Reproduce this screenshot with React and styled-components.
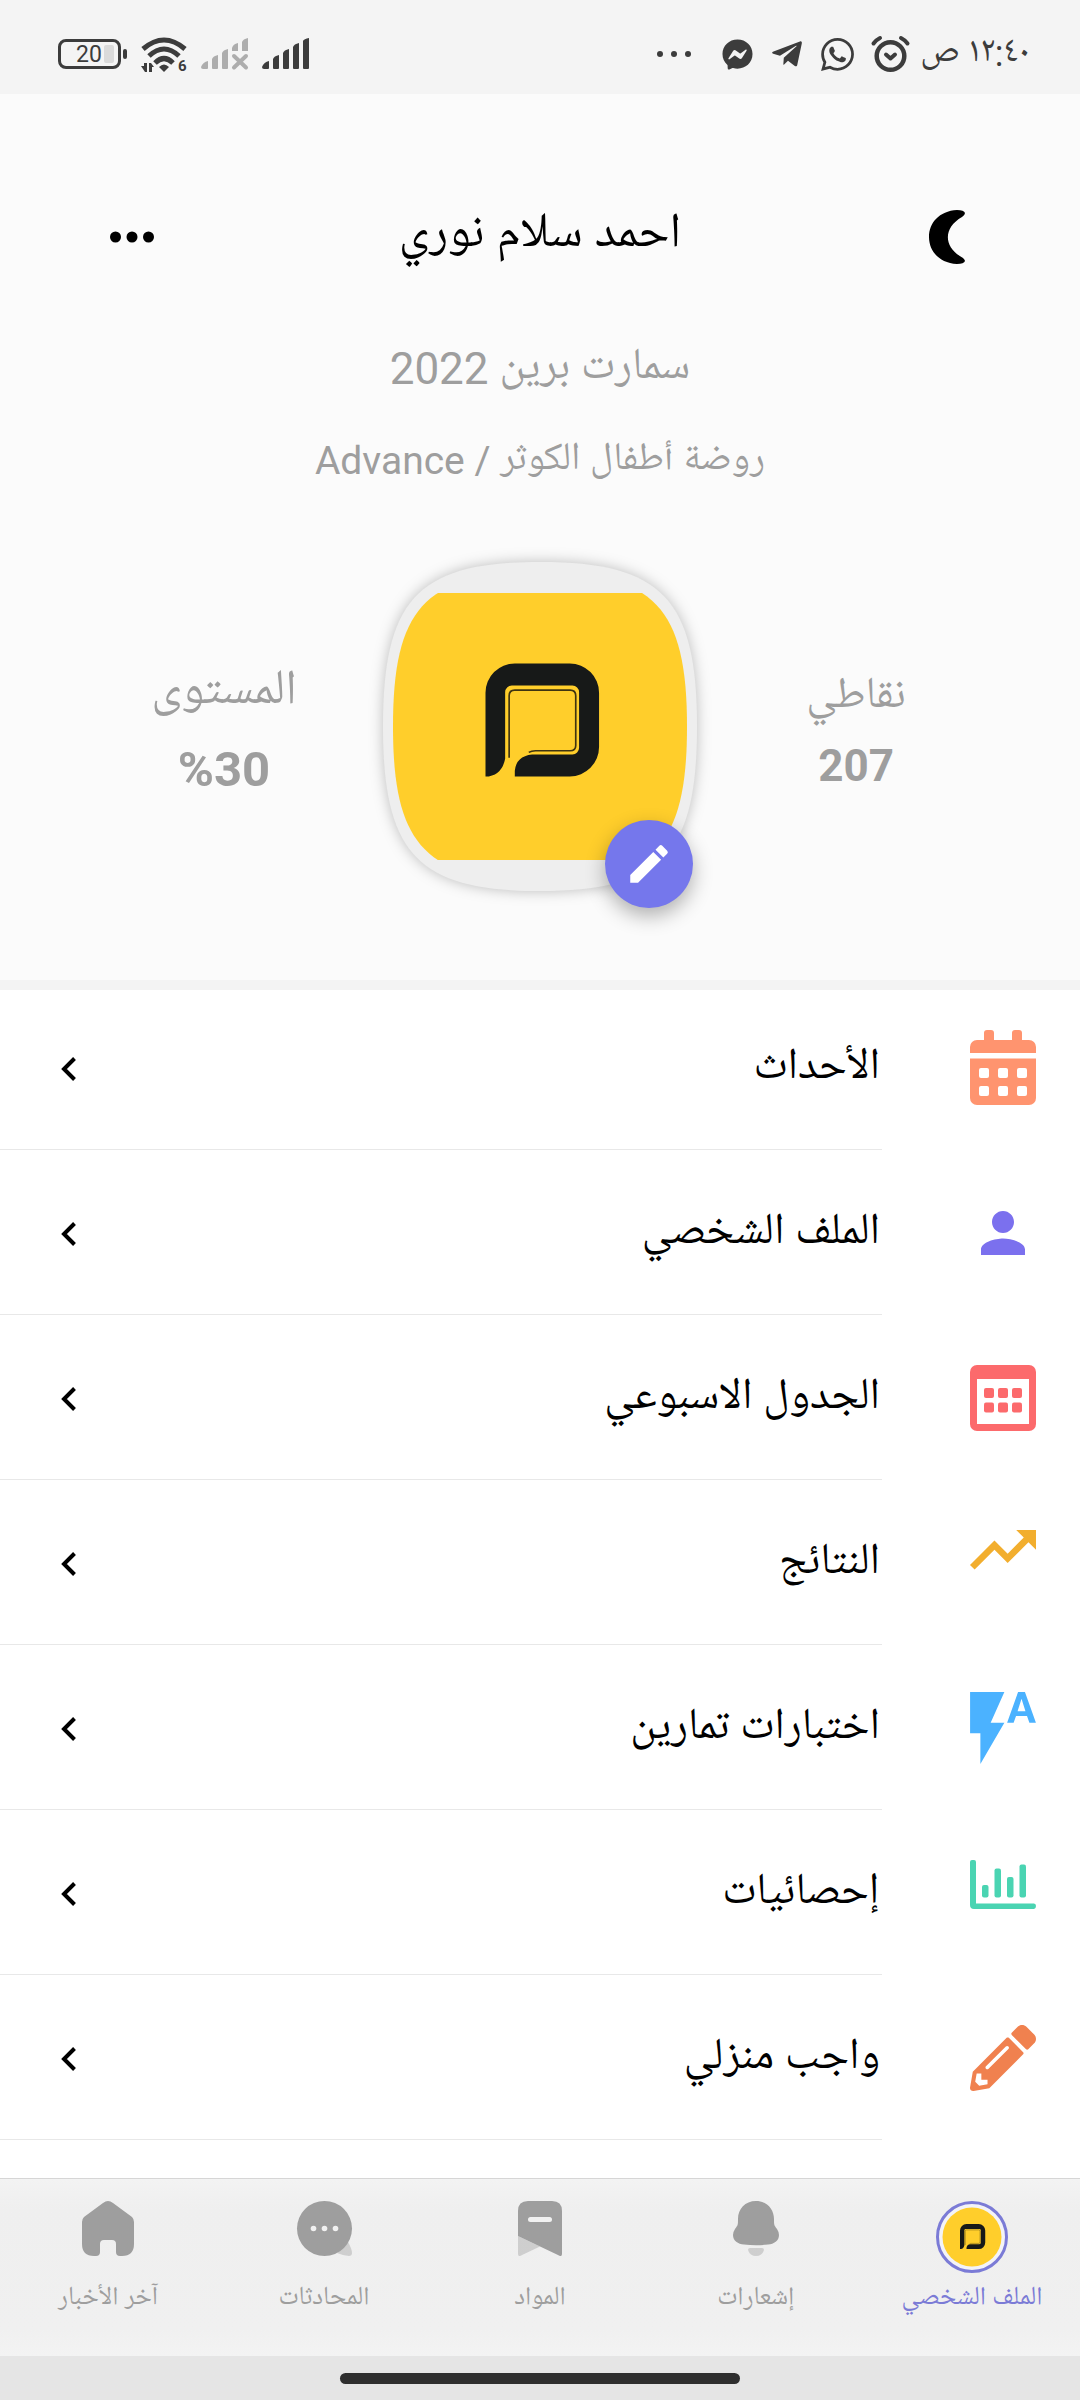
import React from 'react';
import styled, { createGlobalStyle } from 'styled-components';
import { FaFacebookMessenger, FaPencilAlt, FaTelegramPlane } from 'react-icons/fa';
import { MdEdit, MdFlashAuto, MdPerson, MdTrendingUp } from 'react-icons/md';
import { SiWhatsapp } from 'react-icons/si';

const GlobalStyle = createGlobalStyle`
  * {
    box-sizing: border-box;
  }

  body {
    margin: 0;
    background: #fff;
    font-family: Roboto, 'Noto Naskh Arabic UI', 'Noto Naskh Arabic', 'Noto Sans Arabic', 'DejaVu Sans', sans-serif;
  }

  svg {
    display: block;
    flex-shrink: 0;
    overflow: visible;
  }
`;

const Page = styled.div`
  direction: rtl;
  display: flex;
  flex-direction: column;
  min-height: 100vh;
  background: #fff;
`;

const StatusBar = styled.div`
  display: flex;
  align-items: center;
  justify-content: space-between;
  height: 94px;
  padding: 14px 50px 0 58px;
  background: #f4f4f4;
  color: #3c3c3c;
`;

const StatusGroup = styled.div`
  display: flex;
  align-items: center;
  gap: ${({ $gap }) => $gap}px;
`;

const Clock = styled.time`
  font-size: 36px;
  line-height: 40px;
  white-space: nowrap;
`;

const BatteryText = styled.text`
  direction: ltr;
  font-family: Roboto, sans-serif;
  font-size: 23px;
`;

const SmallDigit = styled.text`
  direction: ltr;
  font-family: Roboto, sans-serif;
  font-size: 15px;
  font-weight: 700;
`;

const Header = styled.header`
  position: relative;
  z-index: 1;
  padding: 113px 0 89px;
  background: #fbfbfb;
  border-bottom: 10px solid #f3f3f3;
  text-align: center;
`;

const TopBar = styled.div`
  display: grid;
  grid-template-columns: 1fr auto 1fr;
  align-items: center;
  padding: 0 110px;
`;

const IconButton = styled.button`
  justify-self: ${({ $side }) => $side};
  padding: 0;
  border: 0;
  background: none;
  color: #000;
  cursor: pointer;
`;

const Name = styled.h1`
  margin: 0;
  font-size: 49px;
  font-weight: 400;
  line-height: 60px;
  color: #000;
`;

const Detail = styled.p`
  margin: ${({ $top }) => $top}px 0 0;
  font-size: ${({ $size }) => $size}px;
  line-height: 60px;
  color: #9e9e9e;
`;

const Summary = styled.div`
  display: grid;
  grid-template-columns: 1fr 314px 1fr;
  align-items: center;
  margin-top: 71px;
  padding: 0 65px;
`;

const Stat = styled.div`
  display: flex;
  flex-direction: column;
  align-items: center;
  padding-top: 10px;
  line-height: ${({ $line }) => $line}px;
  color: #9e9e9e;
`;

const StatLabel = styled.span`
  font-size: ${({ $size }) => $size}px;
`;

const StatValue = styled.strong`
  direction: ltr;
  font-size: ${({ $size }) => $size}px;
  font-weight: 700;
`;

const Avatar = styled.div`
  position: relative;

  > svg {
    filter: drop-shadow(0 0 7px rgba(0, 0, 0, 0.25));
  }
`;

const EditButton = styled.button`
  position: absolute;
  right: 4px;
  bottom: -17px;
  display: flex;
  align-items: center;
  justify-content: center;
  width: 88px;
  height: 88px;
  padding: 0;
  border: 0;
  border-radius: 50%;
  background: #7577ec;
  color: #fff;
  box-shadow: 0 8px 20px rgba(0, 0, 0, 0.3);
  cursor: pointer;
`;

const Menu = styled.nav`
  flex: 1;
  margin-top: -5px;
`;

const MenuRow = styled.a`
  display: flex;
  align-items: center;
  gap: 88px;
  height: 165px;
  padding-right: 44px;
  color: #000;
  text-decoration: none;
`;

const MenuIcon = styled.span`
  display: flex;
  justify-content: center;
  width: 66px;
  min-height: 66px;
  color: ${({ $color }) => $color};
`;

const MenuBody = styled.span`
  display: flex;
  flex: 1;
  align-items: center;
  justify-content: space-between;
  height: 100%;
  padding: 3px 2px 0 61px;
  border-bottom: 1px solid #e8e8e8;
`;

const MenuLabel = styled.span`
  font-size: 44px;
  line-height: 60px;
`;

const TabBar = styled.nav`
  display: grid;
  grid-template-columns: repeat(5, 1fr);
  height: 178px;
  padding-top: 22px;
  border-top: 1px solid #d6d6d6;
  background: linear-gradient(#f3f3f3, #efefef 30px, #f0f0f0 150px, #f3f3f3);
`;

const Tab = styled.a`
  display: flex;
  flex-direction: column;
  align-items: center;
  gap: 6px;
  color: ${({ $active }) => ($active ? '#7b7bd6' : '#9e9e9e')};
  font-size: 26px;
  line-height: 40px;
  text-decoration: none;
`;

const TabIcon = styled.span`
  height: 72px;
`;

const GestureBar = styled.div`
  display: flex;
  justify-content: center;
  height: 44px;
  padding-top: 17px;
  background: #e5e5e5;
`;

const GesturePill = styled.div`
  width: 37%;
  height: 11px;
  border-radius: 6px;
  background: #2e2e2e;
`;

const BatteryIcon = () => (
  <svg width="70" height="32" viewBox="0 0 70 32" fill="none">
    <rect x="1.5" y="2.5" width="60" height="27" rx="6.5" stroke="currentColor" strokeWidth="3" />
    <rect x="46" y="7" width="10" height="18" rx="2" fill="#dadada" />
    <rect x="65" y="11" width="4" height="10" rx="2" fill="currentColor" />
    <BatteryText x="18" y="24" fill="currentColor">20</BatteryText>
  </svg>
);

const WifiIcon = () => (
  <svg width="47" height="36" viewBox="0 0 47 36" fill="none" stroke="currentColor" strokeWidth="5">
    <path d="M2 13Q23 -5 44 13M8 20Q23 6 38 20M14 27Q23 18 32 27" />
    <path d="M18 31Q23 26 28 31L23 36Z" fill="currentColor" stroke="none" />
    <path d="M0 30H3V27H6V36H4ZM8 36V27H10L13 31H11V36Z" fill="currentColor" stroke="none" />
    <SmallDigit x="37" y="35" fill="currentColor" stroke="none">6</SmallDigit>
  </svg>
);

const SignalIcon = ({ lost }) => (
  <svg width="48" height="32" viewBox="0 0 48 32" fill={lost ? '#adadad' : 'currentColor'}>
    <path d="M0 29Q2 24 7 23V30Q7 31 6 31H2Q0 31 0 29Z" />
    <path d="M11 21Q12 18 17 17V30Q17 31 16 31H12Q11 31 11 30Z" />
    <path d="M21 15Q22 12 27 11V30Q27 31 26 31H22Q21 31 21 30Z" />
    {lost ? (
      <>
        <path d="M31 10Q32 6 37 5V13H31ZM41 4Q42 1 47 0V13H41Z" />
        <path d="M33 18L45 29.5M45 18L33 29.5" stroke="#adadad" strokeWidth="4" strokeLinecap="round" />
      </>
    ) : (
      <path d="M31 9Q32 6 37 5V30Q37 31 36 31H32Q31 31 31 30ZM41 3Q42 1 47 0V30Q47 31 46 31H42Q41 31 41 30Z" />
    )}
  </svg>
);

const AlarmIcon = () => (
  <svg width="39" height="37" viewBox="0 0 39 37" fill="none" stroke="currentColor" strokeLinecap="round">
    <circle cx="19.5" cy="20" r="13.8" strokeWidth="4.5" />
    <path d="M15 18.5L19.5 22.5L24 18.5" strokeWidth="4" strokeLinejoin="round" />
    <path d="M2.5 7.5Q5 4 9 2M36.5 7.5Q34 4 30 2" strokeWidth="4" />
  </svg>
);

const Dots = ({ width, height, r }) => (
  <svg width={width} height={height} viewBox={`0 0 ${width} ${height}`} fill="currentColor">
    <circle cx={r} cy={height / 2} r={r} />
    <circle cx={width / 2} cy={height / 2} r={r} />
    <circle cx={width - r} cy={height / 2} r={r} />
  </svg>
);

const MoonIcon = () => (
  <svg width="41" height="54" viewBox="0 0 41 54" fill="currentColor">
    <path d="M28 0Q35 0 36 3Q36 5 33 7C14 18 14 37 34 48Q36 50 36 51Q35 54 28 54C10 53 0 41 0 27C0 13 10 1 28 0Z" />
  </svg>
);

// Brand mark, drawn on a 341 x 339 grid
const BrandMark = () => (
  <>
    <path
      fill="#171918"
      d="M0 339V88A88 88 0 0 1 88 0H253A88 88 0 0 1 341 88V251A88 88 0 0 1 253 339H88V322Q92 278 140 273H261A20 20 0 0 0 281 253V86A20 20 0 0 0 261 66H79A20 20 0 0 0 59 86V286Q50 332 10 339Z"
    />
    <path
      fill="none"
      stroke="#3f3411"
      strokeWidth="5"
      d="M71 283V97Q71 80 88 80H254Q271 80 271 97V246Q271 262 254 262H150Q138 262 130 267"
    />
  </>
);

const AvatarPicture = () => (
  <svg width="314" height="329" viewBox="0 0 314 329" role="img" aria-label="الصورة الشخصية">
    <clipPath id="avatar-frame">
      <path d="M157 10.5C271 10.5 304 45 304 164.5S271 318.5 157 318.5S10 284 10 164.5S43 10.5 157 10.5Z" />
    </clipPath>
    <path
      fill="#eeeeee"
      d="M157 0C279 0 314 37 314 164.5S279 329 157 329S0 292 0 164.5S35 0 157 0Z"
    />
    <rect x="0" y="31" width="314" height="267" fill="#ffce2b" clipPath="url(#avatar-frame)" />
    <g transform="translate(102.5 101.5) scale(0.333)">
      <BrandMark />
    </g>
  </svg>
);

const EventsIcon = () => (
  <svg width="66" height="75" viewBox="0 0 66 75" fill="currentColor">
    <path d="M0 23V17A7 7 0 0 1 7 10H14V3Q14 0 17 0H21Q24 0 24 3V10H42V3Q42 0 45 0H49Q52 0 52 3V10H59A7 7 0 0 1 66 17V23Z" />
    <path d="M0 28.5H66V68A7 7 0 0 1 59 75H7A7 7 0 0 1 0 68Z" />
    <g fill="#fff">
      {[9, 28, 47].map((x) => (
        <React.Fragment key={x}>
          <rect x={x} y="38" width="10" height="10" rx="2" />
          <rect x={x} y="56" width="10" height="10" rx="2" />
        </React.Fragment>
      ))}
    </g>
  </svg>
);

const ScheduleIcon = () => (
  <svg width="66" height="66" viewBox="0 0 66 66" fill="currentColor">
    <rect width="66" height="66" rx="7" />
    <rect x="7" y="14" width="52" height="45" fill="#fff" />
    {[14, 28, 42].map((x) => (
      <React.Fragment key={x}>
        <rect x={x} y="23" width="10" height="10" rx="2" />
        <rect x={x} y="37.5" width="10" height="10" rx="2" />
      </React.Fragment>
    ))}
  </svg>
);

const ChartIcon = () => (
  <svg width="66" height="49" viewBox="0 0 66 49" fill="currentColor">
    <path d="M2 0H4Q6 0 6 2V43.5H64Q66 43.5 66 46T64 49H4Q0 49 0 45V2Q0 0 2 0Z" />
    <rect x="12" y="25" width="6.5" height="12.5" rx="2" />
    <rect x="24.5" y="8.5" width="6.5" height="29" rx="2" />
    <rect x="37" y="17" width="6.5" height="20.5" rx="2" />
    <rect x="49.5" y="4.5" width="6.5" height="33" rx="2" />
  </svg>
);

const ChevronIcon = () => (
  <svg width="15" height="24" viewBox="0 0 15 24" fill="none" stroke="currentColor" strokeWidth="4">
    <path d="M13.5 1.5L3 12L13.5 22.5" />
  </svg>
);

const ProfileTabIcon = () => (
  <svg width="72" height="72" viewBox="0 0 72 72">
    <circle cx="36" cy="36" r="34.5" fill="#f3f3f7" stroke="#7b7bd6" strokeWidth="3" />
    <circle cx="36" cy="36" r="29.5" fill="#ffce2b" />
    <g transform="translate(24 23) scale(0.074)">
      <BrandMark />
    </g>
  </svg>
);

const BellIcon = () => (
  <svg width="46" height="55" viewBox="0 0 46 55" fill="currentColor">
    <path d="M23 0C34 0 41 8 41 18C41 24 41 24 44 28Q46 31 46 34C46 40 41 43 35 43.5Q23 45 11 43.5C5 43 0 40 0 34Q0 31 2 28C5 24 5 24 5 18C5 8 12 0 23 0Z" />
    <path opacity="0.4" d="M17 47H29Q31 47 31 49Q29 55 23 55T15 49Q15 47 17 47Z" />
  </svg>
);

const SubjectsIcon = () => (
  <svg width="44" height="55" viewBox="0 0 44 55" fill="currentColor">
    <path d="M10 0H34Q44 0 44 10V53Q44 56 41 54.5L0 35V10Q0 0 10 0Z" />
    <path opacity="0.4" d="M0 35L22 45.5L3 54.5Q0 56 0 53Z" />
    <rect x="10" y="16" width="24" height="5" rx="2.5" fill="#f1f1f1" />
  </svg>
);

const ChatIcon = () => (
  <svg width="55" height="55" viewBox="0 0 55 55" fill="currentColor">
    <path opacity="0.4" d="M51 41Q55 48 55 52Q55 55 52 55Q46 54.5 40 52Z" />
    <circle cx="27.5" cy="27.5" r="27.5" />
    <g fill="#f1f1f1">
      <circle cx="16.5" cy="27.5" r="2.8" />
      <circle cx="27.5" cy="27.5" r="2.8" />
      <circle cx="38.5" cy="27.5" r="2.8" />
    </g>
  </svg>
);

const HomeIcon = () => (
  <svg width="52" height="55" viewBox="0 0 52 55" fill="currentColor">
    <path d="M21 2Q26 -2 31 2L50 16Q52 18 52 21V43Q52 55 40 55H38Q34 55 34 51V43Q34 39 30 39H22Q18 39 18 43V51Q18 55 14 55H12Q0 55 0 43V21Q0 18 2 16Z" />
  </svg>
);

const menuItems = [
  { id: 'events', label: 'الأحداث', color: '#ff946f', icon: <EventsIcon /> },
  { id: 'profile', label: 'الملف الشخصي', color: '#7b70ee', icon: <MdPerson size={66} /> },
  { id: 'schedule', label: 'الجدول الاسبوعي', color: '#fc6a6c', icon: <ScheduleIcon /> },
  {
    id: 'results',
    label: 'النتائج',
    color: '#f2ae2e',
    icon: <MdTrendingUp size={66} viewBox="2 6 20 12" preserveAspectRatio="xMidYMin" />,
  },
  {
    id: 'quizzes',
    label: 'اختبارات تمارين',
    color: '#4bb2ff',
    icon: <MdFlashAuto size={72} viewBox="3 2 19.2 21" />,
  },
  { id: 'statistics', label: 'إحصائيات', color: '#4ad4b2', icon: <ChartIcon /> },
  { id: 'homework', label: 'واجب منزلي', color: '#f0814f', icon: <FaPencilAlt size={66} /> },
];

const tabs = [
  { id: 'me', label: 'الملف الشخصي', icon: <ProfileTabIcon />, active: true },
  { id: 'notifications', label: 'إشعارات', icon: <BellIcon /> },
  { id: 'subjects', label: 'المواد', icon: <SubjectsIcon /> },
  { id: 'chats', label: 'المحادثات', icon: <ChatIcon /> },
  { id: 'news', label: 'آخر الأخبار', icon: <HomeIcon /> },
];

const App = () => {
  return (
    <Page lang="ar">
      <GlobalStyle />
      <StatusBar>
        <StatusGroup $gap={17}>
          <StatusGroup $gap={10}>
            <Clock>١٢:٤٠ ص</Clock>
            <AlarmIcon />
          </StatusGroup>
          <SiWhatsapp size={33} />
          <FaTelegramPlane size={34} />
          <StatusGroup $gap={31}>
            <FaFacebookMessenger size={31} />
            <Dots width={34} height={6} r={3} />
          </StatusGroup>
        </StatusGroup>
        <StatusGroup $gap={13}>
          <SignalIcon />
          <SignalIcon lost />
          <WifiIcon />
          <BatteryIcon />
        </StatusGroup>
      </StatusBar>

      <Header>
        <TopBar>
          <IconButton type="button" $side="start" aria-label="الوضع الليلي">
            <MoonIcon />
          </IconButton>
          <Name>احمد سلام نوري</Name>
          <IconButton type="button" $side="end" aria-label="المزيد">
            <Dots width={44} height={12} r={5.5} />
          </IconButton>
        </TopBar>
        <Detail $top={72} $size={44}>سمارت برين 2022</Detail>
        <Detail $top={32} $size={39}>روضة أطفال الكوثر / Advance</Detail>
        <Summary>
          <Stat $line={68}>
            <StatLabel $size={44}>نقاطي</StatLabel>
            <StatValue $size={44}>207</StatValue>
          </Stat>
          <Avatar>
            <AvatarPicture />
            <EditButton type="button" aria-label="تعديل الصورة">
              <MdEdit size={50} />
            </EditButton>
          </Avatar>
          <Stat $line={76}>
            <StatLabel $size={49}>المستوى</StatLabel>
            <StatValue $size={49}>%30</StatValue>
          </Stat>
        </Summary>
      </Header>

      <Menu>
        {menuItems.map((item) => (
          <MenuRow key={item.id} href={`#${item.id}`}>
            <MenuIcon $color={item.color}>{item.icon}</MenuIcon>
            <MenuBody>
              <MenuLabel>{item.label}</MenuLabel>
              <ChevronIcon />
            </MenuBody>
          </MenuRow>
        ))}
      </Menu>

      <TabBar>
        {tabs.map((tab) => (
          <Tab key={tab.id} href={`#${tab.id}`} $active={tab.active}>
            <TabIcon>{tab.icon}</TabIcon>
            {tab.label}
          </Tab>
        ))}
      </TabBar>
      <GestureBar>
        <GesturePill />
      </GestureBar>
    </Page>
  );
};

export default App;
